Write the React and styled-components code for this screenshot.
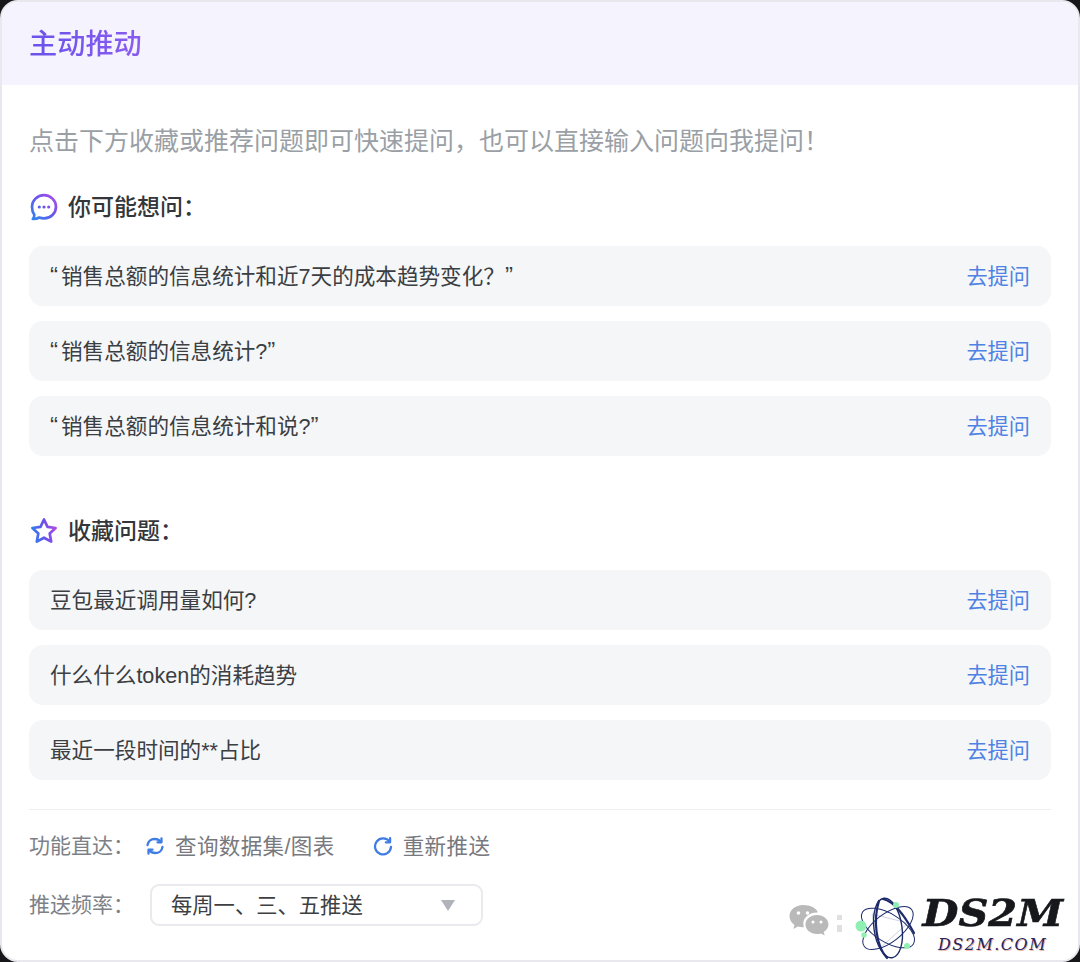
import React from "react";
import styled, { createGlobalStyle } from "styled-components";

const Global = createGlobalStyle`
  html, body { margin: 0; padding: 0; background: #17171a; }
  body { font-family: "Liberation Sans", "Noto Sans CJK SC", sans-serif; }
  * { box-sizing: border-box; }
`;
const Card = styled.div`
  position: relative; width: 1080px; height: 962px; overflow: hidden;
  background: #fff; border: 2px solid #e8e8ee; border-radius: 18px;
`;
const Header = styled.header`
  height: 83px; background: #f5f4fe; display: flex; align-items: center; padding-left: 27px;
`;
const Title = styled.h1`
  margin: 0; padding-top: 1px; font-size: 28.2px; line-height: 40px; font-weight: 500; color: #7152e9;
  background: linear-gradient(90deg, #6a52ea, #8a5cf0); -webkit-background-clip: text; background-clip: text; -webkit-text-fill-color: transparent;
`;
const Body = styled.main`
  padding: 39px 27px 0;
`;
const Desc = styled.p`
  margin: 0; font-size: 25px; line-height: 34px; color: #9a9fa6; white-space: nowrap;
`;
const SectionHead = styled.div`
  display: flex; align-items: center; gap: 10px; height: 32px; margin-top: ${p => p.$top}px; margin-left: 1px;
`;
const SectionName = styled.h2`
  margin: 0; font-size: 23px; line-height: 32px; font-weight: 500; color: #33363a;
`;
const Rows = styled.div`
  display: flex; flex-direction: column; gap: 15px; margin-top: 23px;
`;
const Row = styled.div`
  height: 60px; border-radius: 14px; background: #f5f6f8; display: flex; align-items: center;
  justify-content: space-between; padding: 0 21px;
`;
const RowText = styled.span`
  padding-bottom: 4px; font-size: 21.6px; color: #3b3e42; white-space: nowrap;
`;
const OpenQuote = styled.span`
  font-size: 24px; margin: 0 3px 0 0;
`;
const CloseQuote = styled.span`
  font-size: 24px; margin-left: 0;
`;
const Ask = styled.a`
  padding-bottom: 4px; font-size: 21.2px; color: #4f82e3; white-space: nowrap;
`;
const Divider = styled.hr`
  margin: 29px 0 0; height: 1px; border: 0; background: #eceef0;
`;
const FooterRow = styled.div`
  display: flex; align-items: center; height: ${p => p.$h}px; margin-top: ${p => p.$top}px;
`;
const Label = styled.span`
  padding-bottom: 5px; font-size: 21px; color: #7d8187; width: ${p => p.$w}px; white-space: nowrap;
`;
const Action = styled.span`
  display: flex; align-items: center; gap: 10px; font-size: 21.5px; letter-spacing: 0.4px; color: #77797e; margin-right: 38px; white-space: nowrap;
`;
const ActionText = styled.span`
  padding-bottom: 3px;
`;
const Select = styled.div`
  width: 333px; height: 42px; border: 2px solid #e9eaee; border-radius: 9px; background: #fff;
  display: flex; align-items: center; justify-content: space-between; padding: 0 26px 0 19px;
  font-size: 21.3px; color: #3d3f43;
`;
const SelectText = styled.span`
  padding-bottom: 4px;
`;
const Caret = styled.span`
  width: 0; height: 0; border-left: 7px solid transparent; border-right: 7px solid transparent;
  border-top: 11px solid #b1b3bb; margin-top: 1px;
`;
const WeChat = styled.svg`
  position: absolute; left: 786px; top: 901px; width: 44px; height: 36px;
`;
const CutMark = styled.span`
  position: absolute; left: 835px; top: 913px; width: 5px; height: 17px;
  background: linear-gradient(180deg, #e0e0e0 0 30%, transparent 30% 60%, #e0e0e0 60% 100%);
`;
const Watermark = styled.div`
  position: absolute; left: 840px; top: 891px; width: 240px; height: 71px; background: #fff;
  display: flex; align-items: flex-start; padding-left: 8px;
`;
const LogoSvg = styled.svg`
  width: 72px; height: 69px; flex: none;
`;
const LogoText = styled.div`
  width: 141px; display: flex; flex-direction: column; align-items: center;
`;
const LogoMain = styled.span`
  font-family: "DejaVu Serif", serif; font-style: italic; font-weight: 700; font-size: 37px; line-height: 38px; margin-top: 1px;
  color: #17181c; white-space: nowrap; transform: scaleX(1.12); -webkit-text-stroke: 0.6px #17181c;
`;
const LogoSub = styled.span`
  font-family: "DejaVu Serif", serif; font-style: italic; font-size: 16px; line-height: 20px; margin-top: 3px;
  color: #26265e; letter-spacing: 1.5px; white-space: nowrap; text-shadow: 1px 1px 0 #f0b8a8;
`;

const ChatIcon = () => (
  <svg width="28" height="28" viewBox="0 0 28 28" fill="none">
    <defs>
      <linearGradient id="cg" x1="0" y1="1" x2="1" y2="0">
        <stop offset="0" stopColor="#2f86ee" /><stop offset="0.55" stopColor="#6a55ea" /><stop offset="1" stopColor="#b34ce8" />
      </linearGradient>
    </defs>
    <path d="M14 2.200c6.700 0 12 5.200 12 11.600S20.700 25.400 14 25.400c-1.700 0-3.300-.3-4.700-.9-1.500.9-3.700 1.400-6.500 1.500 1-1.200 1.600-2.600 1.500-4.200C2.900 19.800 2 17 2 13.800 2 7.400 7.300 2.200 14 2.200Z" stroke="url(#cg)" strokeWidth="2.700" strokeLinejoin="round" />
    <circle cx="9.300" cy="14" r="1.600" fill="#5b5fea" />
    <circle cx="14" cy="14" r="1.600" fill="#6a55ea" />
    <circle cx="18.700" cy="14" r="1.600" fill="#7d50ea" />
  </svg>
);
const StarIcon = () => (
  <svg width="28" height="28" viewBox="0 0 28 28" fill="none">
    <defs>
      <linearGradient id="sg" x1="0" y1="0.700" x2="1" y2="0.500">
        <stop offset="0" stopColor="#2f7fee" /><stop offset="0.55" stopColor="#6a4fea" /><stop offset="1" stopColor="#a94ce8" />
      </linearGradient>
    </defs>
    <path d="M14 2.500l3.500 7.400 8.100 1.100-5.900 5.600 1.500 8-7.200-3.900-7.200 3.900 1.500-8L2.400 11l8.100-1.100L14 2.500Z" stroke="url(#sg)" strokeWidth="2.700" strokeLinejoin="round" />
  </svg>
);
const SyncIcon = () => (
  <svg width="20" height="20" viewBox="0 0 20 20" fill="none" stroke="#3f7ce4" strokeWidth="2.300" strokeLinecap="round" strokeLinejoin="round">
    <path d="M2.500 9.200C3 5.500 6 3 9.700 3c2.400 0 4.500 1 5.900 2.800" />
    <path d="M16.500 2.300v4h-4" />
    <path d="M17.500 10.800C17 14.500 14 17 10.300 17c-2.400 0-4.500-1-5.900-2.800" />
    <path d="M3.500 17.700v-4h4" />
  </svg>
);
const RedoIcon = () => (
  <svg width="20" height="20" viewBox="0 0 22 22" fill="none" stroke="#3f7ce4" strokeWidth="2.500" strokeLinecap="round" strokeLinejoin="round">
    <path d="M18.300 6.500A8.800 8.800 0 1 0 19.800 12" />
    <path d="M18.800 2.300v4.700h-4.700" />
  </svg>
);

const q1 = ["销售总额的信息统计和近7天的成本趋势变化？", "销售总额的信息统计?", "销售总额的信息统计和说?"];
const q2 = ["豆包最近调用量如何?", "什么什么token的消耗趋势", "最近一段时间的**占比"];

const QList = ({ items, quoted }) => (
  <Rows>
    {items.map(t => (
      <Row key={t}>
        <RowText>
          {quoted && <OpenQuote>“</OpenQuote>}
          {t}
          {quoted && <CloseQuote>”</CloseQuote>}
        </RowText>
        <Ask>去提问</Ask>
      </Row>
    ))}
  </Rows>
);

export default function App() {
  return (
    <Card>
      <Global />
      <Header><Title>主动推动</Title></Header>
      <Body>
        <Desc>点击下方收藏或推荐问题即可快速提问，也可以直接输入问题向我提问！</Desc>
        <SectionHead $top={33}><ChatIcon /><SectionName>你可能想问：</SectionName></SectionHead>
        <QList items={q1} quoted />
        <SectionHead $top={59}><StarIcon /><SectionName>收藏问题：</SectionName></SectionHead>
        <QList items={q2} />
        <Divider />
        <FooterRow $h={30} $top={21}>
          <Label $w={116}>功能直达：</Label>
          <Action><SyncIcon /><ActionText>查询数据集/图表</ActionText></Action>
          <Action><RedoIcon /><ActionText>重新推送</ActionText></Action>
        </FooterRow>
        <FooterRow $h={42} $top={23}>
          <Label $w={121}>推送频率：</Label>
          <Select><SelectText>每周一、三、五推送</SelectText><Caret /></Select>
        </FooterRow>
      </Body>
      <WeChat viewBox="0 0 44 36" fill="#b9b9b9">
        <path d="M15 2C7.300 2 1.500 7 1.500 13.200c0 3.600 2 6.700 5 8.800l-1.200 4 4.600-2.400c1.600.4 3.300.7 5 .7l1 0c-.4-1.200-.6-2.400-.6-3.600 0-6.400 6-11.300 13.500-11.300l1.100 0C28.500 5.200 22.300 2 15 2Z" />
        <path d="M29 12C22.500 12 17.500 16.300 17.500 21.500S22.500 31 29 31c1.400 0 2.800-.2 4-.6l3.700 2.100-1-3.400c2.800-1.900 4.700-4.600 4.700-7.600C40.500 16.300 35.500 12 29 12Z" />
        <circle cx="10.500" cy="10" r="1.800" fill="#fff" /><circle cx="19.500" cy="10" r="1.800" fill="#fff" />
        <circle cx="25" cy="19" r="1.500" fill="#fff" /><circle cx="33" cy="19" r="1.500" fill="#fff" />
      </WeChat>
      <CutMark />
      <Watermark>
        <LogoSvg viewBox="0 3 72 69" fill="none">
          <path d="M22 24 L58 33 L30 58 Z" stroke="#cfd4e4" strokeWidth="1" />
          <g stroke="#1e2b6b" strokeWidth="1.400">
            <ellipse cx="38" cy="38" rx="14" ry="30" transform="rotate(-8 38 38)" />
            <ellipse cx="38" cy="38" rx="14" ry="30" transform="rotate(-58 38 38)" strokeWidth="1" />
            <ellipse cx="38" cy="38" rx="14" ry="30" transform="rotate(52 38 38)" strokeWidth="1" />
          </g>
          <path d="M33 9 C44 11 56 28 64 43" stroke="#1e2b6b" strokeWidth="2.200" strokeLinecap="round" />
          <path d="M29 11 C23 30 26 56 37 68" stroke="#1e2b6b" strokeWidth="2.200" strokeLinecap="round" />
          <circle cx="11" cy="36" r="5.500" fill="#8ff0b4" />
          <circle cx="46" cy="15" r="3" fill="#8ff0b4" />
          <circle cx="57" cy="56" r="3" fill="#8ff0b4" />
          <circle cx="14" cy="45" r="2.700" fill="#8ff0b4" />
        </LogoSvg>
        <LogoText>
          <LogoMain>DS2M</LogoMain>
          <LogoSub>DS2M.COM</LogoSub>
        </LogoText>
      </Watermark>
    </Card>
  );
}
